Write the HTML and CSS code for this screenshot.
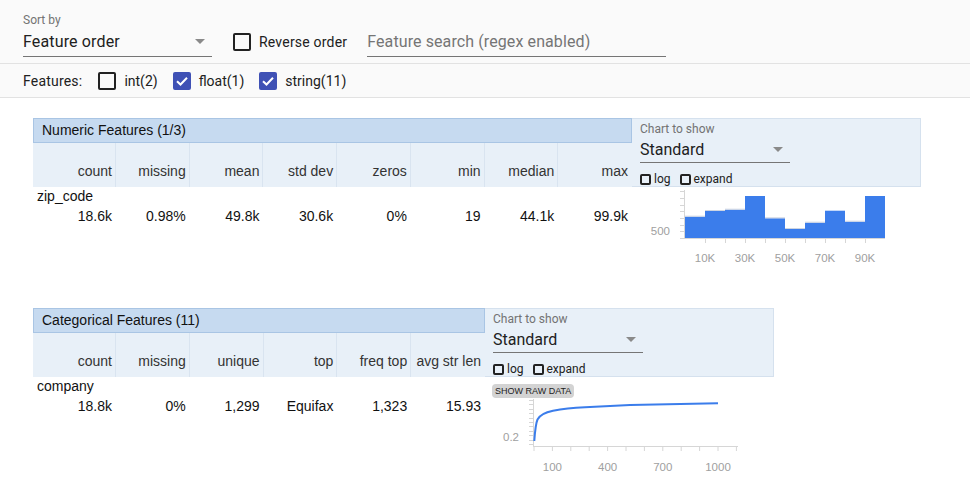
FILE: index.html
```html
<!DOCTYPE html>
<html>
<head>
<meta charset="utf-8">
<link rel="stylesheet" href="styles.css">
</head>
<body>
<div class="controls">
  <div class="row1">
    <div class="sort">
      <div class="dd-label">Sort by</div>
      <div class="dd-input"><span>Feature order</span><span class="arrow"></span></div>
    </div>
    <div class="cb rev"><span class="box"></span><span>Reverse order</span></div>
    <div class="search">Feature search (regex enabled)</div>
  </div>
  <div class="row2">
    <span class="flabel">Features:</span>
    <div class="cb"><span class="box"></span><span>int(2)</span></div>
    <div class="cb"><span class="box checked"><svg viewBox="0 0 14 14" width="14" height="14"><polyline points="2,7.2 5.5,10.5 12,3.8" fill="none" stroke="#fff" stroke-width="2"/></svg></span><span>float(1)</span></div>
    <div class="cb"><span class="box checked"><svg viewBox="0 0 14 14" width="14" height="14"><polyline points="2,7.2 5.5,10.5 12,3.8" fill="none" stroke="#fff" stroke-width="2"/></svg></span><span>string(11)</span></div>
  </div>
</div>

<div class="main">
  <div class="section num">
    <div class="thead">
      <div class="title">Numeric Features (1/3)</div>
      <div class="colheads">
        <div>count</div><div>missing</div><div>mean</div><div>std dev</div><div>zeros</div><div>min</div><div>median</div><div>max</div>
      </div>
    </div>
    <div class="panel">
      <div class="p-label">Chart to show</div>
      <div class="p-input"><span>Standard</span><span class="arrow"></span></div>
      <div class="p-checks">
        <span class="sbox"></span><span class="slabel">log</span>
        <span class="sbox second"></span><span class="slabel">expand</span>
      </div>
    </div>
    <div class="data">
      <div class="name">zip_code</div>
      <div class="vals">
        <div>18.6k</div><div>0.98%</div><div>49.8k</div><div>30.6k</div><div>0%</div><div>19</div><div>44.1k</div><div>99.9k</div>
      </div>
    </div>
    <div class="chart">
      <svg width="289" height="90" viewBox="0 0 289 90">
        <g fill="#3b7deb">
          <rect x="53" y="29.7" width="20" height="21.3"/>
          <rect x="73" y="24" width="20" height="27"/>
          <rect x="93" y="22.7" width="20" height="28.3"/>
          <rect x="113" y="9" width="20" height="42"/>
          <rect x="133" y="31.3" width="20" height="19.7"/>
          <rect x="153" y="42" width="20" height="9"/>
          <rect x="173" y="35.7" width="20" height="15.3"/>
          <rect x="193" y="23.7" width="20" height="27.3"/>
          <rect x="213" y="34.7" width="20" height="16.3"/>
          <rect x="233" y="9" width="20" height="42"/>
        </g>
        <g fill="#cdd5e2">
          <rect x="53" y="28.7" width="20" height="1"/>
          <rect x="73" y="23" width="20" height="1"/>
          <rect x="93" y="21.7" width="20" height="1"/>
          <rect x="133" y="30.3" width="20" height="1"/>
          <rect x="153" y="41" width="20" height="1"/>
          <rect x="173" y="34.7" width="20" height="1"/>
          <rect x="213" y="33.7" width="20" height="1"/>
        </g>
        <g stroke="#d6d6d6" stroke-width="1">
          <line x1="52.5" y1="3" x2="52.5" y2="52"/>
          <line x1="48" y1="4.5" x2="53" y2="4.5"/>
          <line x1="48" y1="11.5" x2="53" y2="11.5"/>
          <line x1="48" y1="18.5" x2="53" y2="18.5"/>
          <line x1="48" y1="24.5" x2="53" y2="24.5"/>
          <line x1="48" y1="31.5" x2="53" y2="31.5"/>
          <line x1="48" y1="38.5" x2="53" y2="38.5"/>
          <line x1="48" y1="44.5" x2="53" y2="44.5"/>
          <line x1="48" y1="51.5" x2="53" y2="51.5"/>
          <line x1="52" y1="51.5" x2="253" y2="51.5"/>
          <line x1="73.5" y1="51" x2="73.5" y2="56"/>
          <line x1="93.5" y1="51" x2="93.5" y2="56"/>
          <line x1="113.5" y1="51" x2="113.5" y2="56"/>
          <line x1="133.5" y1="51" x2="133.5" y2="56"/>
          <line x1="153.5" y1="51" x2="153.5" y2="56"/>
          <line x1="173.5" y1="51" x2="173.5" y2="56"/>
          <line x1="193.5" y1="51" x2="193.5" y2="56"/>
          <line x1="213.5" y1="51" x2="213.5" y2="56"/>
          <line x1="233.5" y1="51" x2="233.5" y2="56"/>
        </g>
        <g class="axlabel">
          <text x="38" y="48" text-anchor="end">500</text>
          <text x="73" y="75" text-anchor="middle">10K</text>
          <text x="113" y="75" text-anchor="middle">30K</text>
          <text x="153" y="75" text-anchor="middle">50K</text>
          <text x="193" y="75" text-anchor="middle">70K</text>
          <text x="233" y="75" text-anchor="middle">90K</text>
        </g>
      </svg>
    </div>
  </div>

  <div class="section cat">
    <div class="thead">
      <div class="title">Categorical Features (11)</div>
      <div class="colheads c6">
        <div>count</div><div>missing</div><div>unique</div><div>top</div><div>freq top</div><div>avg str len</div>
      </div>
    </div>
    <div class="panel">
      <div class="p-label">Chart to show</div>
      <div class="p-input"><span>Standard</span><span class="arrow"></span></div>
      <div class="p-checks">
        <span class="sbox"></span><span class="slabel">log</span>
        <span class="sbox second"></span><span class="slabel">expand</span>
      </div>
    </div>
    <div class="data">
      <div class="name">company</div>
      <div class="vals c6">
        <div>18.8k</div><div>0%</div><div>1,299</div><div>Equifax</div><div>1,323</div><div>15.93</div>
      </div>
    </div>
    <div class="chart cchart">
      <div class="rawbtn">SHOW RAW DATA</div>
      <svg width="289" height="79" viewBox="0 0 289 79">
        <g stroke="#d6d6d6" stroke-width="1">
          <line x1="48.5" y1="1" x2="48.5" y2="49"/>
          <line x1="44" y1="2.5" x2="49" y2="2.5"/>
          <line x1="44" y1="6.5" x2="49" y2="6.5"/>
          <line x1="44" y1="11.5" x2="49" y2="11.5"/>
          <line x1="44" y1="15.5" x2="49" y2="15.5"/>
          <line x1="44" y1="20.5" x2="49" y2="20.5"/>
          <line x1="44" y1="24.5" x2="49" y2="24.5"/>
          <line x1="44" y1="28.5" x2="49" y2="28.5"/>
          <line x1="44" y1="33.5" x2="49" y2="33.5"/>
          <line x1="44" y1="37.5" x2="49" y2="37.5"/>
          <line x1="44" y1="42.5" x2="49" y2="42.5"/>
          <line x1="44" y1="46.5" x2="49" y2="46.5"/>
          <line x1="48" y1="48.5" x2="253" y2="48.5"/>
          <line x1="49" y1="48" x2="49" y2="53"/>
          <line x1="67.4" y1="48" x2="67.4" y2="53"/>
          <line x1="85.8" y1="48" x2="85.8" y2="53"/>
          <line x1="104.2" y1="48" x2="104.2" y2="53"/>
          <line x1="122.6" y1="48" x2="122.6" y2="53"/>
          <line x1="141" y1="48" x2="141" y2="53"/>
          <line x1="159.4" y1="48" x2="159.4" y2="53"/>
          <line x1="177.8" y1="48" x2="177.8" y2="53"/>
          <line x1="196.2" y1="48" x2="196.2" y2="53"/>
          <line x1="214.6" y1="48" x2="214.6" y2="53"/>
          <line x1="233" y1="48" x2="233" y2="53"/>
          <line x1="251.4" y1="48" x2="251.4" y2="53"/>
        </g>
        <path d="M49.3,43 C50,33 50.5,26 52.5,21.5 C55,16.5 60,14.3 68,12.7 C78,10.8 90,9.7 100,9.2 L145,7 L233,5.3" fill="none" stroke="#3b7deb" stroke-width="2"/>
        <g class="axlabel">
          <text x="34" y="42.5" text-anchor="end">0.2</text>
          <text x="67.4" y="73" text-anchor="middle">100</text>
          <text x="122.6" y="73" text-anchor="middle">400</text>
          <text x="177.8" y="73" text-anchor="middle">700</text>
          <text x="233" y="73" text-anchor="middle">1000</text>
        </g>
      </svg>
    </div>
  </div>
</div>
</body>
</html>
```

FILE: styles.css
```css
* { box-sizing: border-box; }
body {
  margin: 0;
  background: #fff;
  font-family: Roboto, "Liberation Sans", sans-serif;
  color: #212121;
}
.controls {
  background: #fafafa;
}
.row1 {
  height: 64px;
  display: flex;
  align-items: flex-start;
  padding-left: 23px;
  border-bottom: 1px solid #e2e2e2;
}
.row2 {
  height: 34px;
  display: flex;
  align-items: center;
  padding-left: 23px;
  border-bottom: 1px solid #e2e2e2;
  font-size: 14px;
}
.sort {
  width: 189px;
  margin-top: 13px;
}
.dd-label {
  font-size: 12px;
  line-height: 14px;
  color: #737373;
}
.dd-input {
  height: 30px;
  border-bottom: 1px solid #757575;
  display: flex;
  align-items: center;
  justify-content: space-between;
  font-size: 16px;
  letter-spacing: 0.15px;
  padding-right: 7px;
}
.arrow {
  width: 0;
  height: 0;
  border-left: 5px solid transparent;
  border-right: 5px solid transparent;
  border-top: 5px solid #8a8a8a;
}
.cb {
  display: flex;
  align-items: center;
  gap: 8px;
  font-size: 14px;
  height: 18px;
}
.rev {
  margin-left: 21px;
  margin-top: 33px;
  letter-spacing: 0.2px;
}
.search {
  margin-left: 20px;
  margin-top: 27px;
  width: 299px;
  height: 30px;
  line-height: 29px;
  border-bottom: 1px solid #757575;
  font-size: 16px;
  letter-spacing: 0.1px;
  color: #757575;
}
.flabel {
  margin-right: 16px;
  letter-spacing: 0.2px;
}
.row2 .cb + .cb {
  margin-left: 15px;
}
.box {
  width: 18px;
  height: 18px;
  border: 2px solid #222;
  border-radius: 2px;
  display: flex;
  align-items: center;
  justify-content: center;
}
.box.checked {
  background: #3f51b5;
  border-color: #3f51b5;
}
.main {
  padding: 20px 0 0 33px;
}
.section {
  display: grid;
  grid-template-columns: 599px 289px;
}
.section.cat {
  grid-template-columns: 452px 289px;
  margin-top: 31px;
}
.title {
  height: 25px;
  background: #c6daf0;
  border: 1px solid #a9c5e4;
  padding-left: 8px;
  font-family: "Liberation Sans", Arial, sans-serif;
  font-size: 14px;
  line-height: 23px;
  color: #111;
}
.colheads {
  display: grid;
  grid-template-columns: 83px repeat(7, 1fr);
  height: 44px;
  background: #e8f0f8;
  font-family: "Liberation Sans", Arial, sans-serif;
  font-size: 14px;
  color: #333;
}
.colheads.c6,
.vals.c6 {
  grid-template-columns: 83px repeat(5, 1fr);
}
.colheads div {
  border-right: 1px solid #d9e4f0;
  text-align: right;
  padding: 0 3px 8px 0;
  line-height: 16px;
  display: flex;
  align-items: flex-end;
  justify-content: flex-end;
  white-space: nowrap;
}
.colheads div:last-child {
  border-right: none;
  padding-right: 4px;
}
.panel {
  background: #e8f0f8;
  border: 1px solid #d5e1ee;
  border-left: none;
  padding: 3px 8px 0 8px;
}
.p-label {
  font-size: 12px;
  line-height: 14px;
  color: #737373;
}
.p-input {
  width: 150px;
  height: 27px;
  padding-top: 1px;
  border-bottom: 1px solid #757575;
  display: flex;
  align-items: center;
  justify-content: space-between;
  font-size: 16px;
  padding-right: 7px;
}
.p-checks {
  margin-top: 10px;
  display: flex;
  align-items: center;
  height: 12px;
  font-size: 12px;
}
.sbox {
  width: 11px;
  height: 11px;
  border: 2px solid #222;
  border-radius: 2px;
  margin-right: 3px;
}
.sbox.second {
  margin-left: 9px;
}
.slabel {
  line-height: 12px;
}
.data {
  font-family: "Liberation Sans", Arial, sans-serif;
  font-size: 14px;
  color: #111;
}
.name {
  line-height: 18px;
  padding-left: 4px;
}
.vals {
  display: grid;
  grid-template-columns: 83px repeat(7, 1fr);
  line-height: 22px;
}
.vals div {
  text-align: right;
  padding-right: 4px;
}
.chart svg {
  display: block;
}
.cchart {
  display: flex;
  flex-direction: column;
  align-items: flex-start;
}
.rawbtn {
  margin: 7px 0 0 7px;
  height: 14px;
  padding: 0 3px;
  background: #d3d3d3;
  border-radius: 4px;
  font-family: "Liberation Sans", Arial, sans-serif;
  font-size: 9px;
  line-height: 14px;
  color: #222;
}
.axlabel {
  font-family: "Liberation Sans", Arial, sans-serif;
  font-size: 11.5px;
  fill: #a0a0a0;
}
```
